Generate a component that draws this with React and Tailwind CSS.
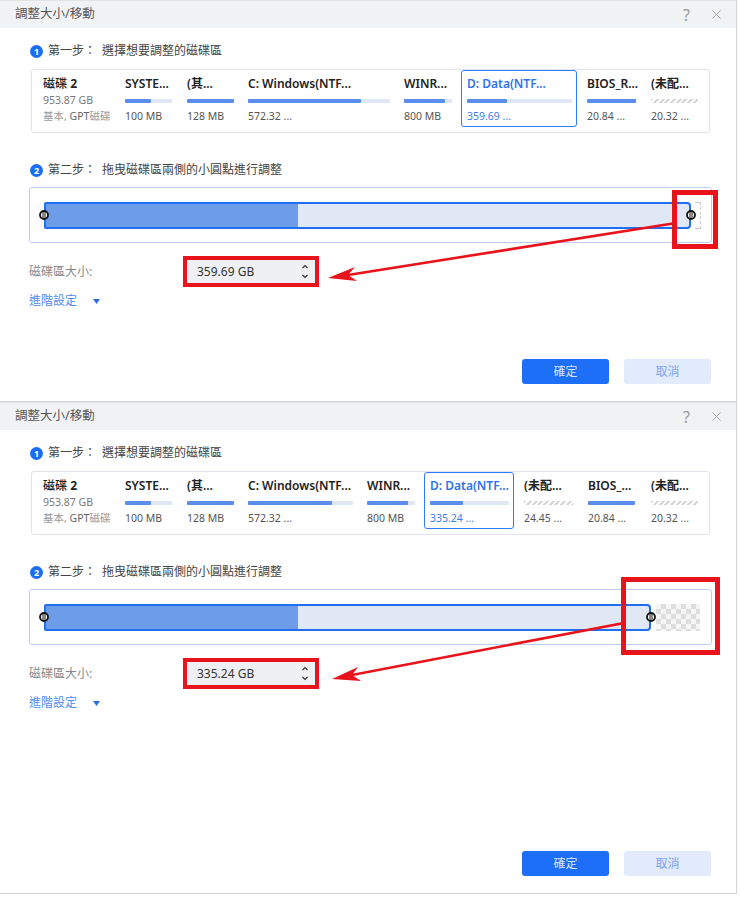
import { X } from 'lucide-react';

const top = {
  height: 'h-[402px]',
  parts: [
    { w: 'w-[62px]', name: 'SYSTE...', bar: 'w-[47px]', fill: 'w-[26px]', size: '100 MB' },
    { w: 'w-[61px]', name: '(其...', bar: 'w-[47px]', fill: 'w-[47px]', size: '128 MB' },
    { w: 'w-[156px]', name: 'C: Windows(NTF...', bar: 'w-[142px]', fill: 'w-[113px]', size: '572.32 ...' },
    { w: 'w-[57px]', name: 'WINR...', bar: 'w-[48px]', fill: 'w-[41px]', size: '800 MB' },
    { w: 'w-[126px]', box: 'w-[116px]', sel: true, name: 'D: Data(NTF...', bar: 'w-[105px]', fill: 'w-[40px]', size: '359.69 ...' },
    { w: 'w-[64px]', name: 'BIOS_R...', bar: 'w-[49px]', fill: 'w-[49px]', size: '20.84 ...' },
    { w: 'w-[58px]', name: '(未配...', bar: 'w-[47px]', free: true, size: '20.32 ...' },
  ],
  track: 'w-[647px]',
  rest: 'small',
  value: '359.69 GB',
};

const bottom = {
  height: 'h-[492px]',
  parts: [
    { w: 'w-[62px]', name: 'SYSTE...', bar: 'w-[47px]', fill: 'w-[26px]', size: '100 MB' },
    { w: 'w-[61px]', name: '(其...', bar: 'w-[47px]', fill: 'w-[47px]', size: '128 MB' },
    { w: 'w-[119px]', name: 'C: Windows(NTF...', bar: 'w-[105px]', fill: 'w-[84px]', size: '572.32 ...' },
    { w: 'w-[57px]', name: 'WINR...', bar: 'w-[48px]', fill: 'w-[41px]', size: '800 MB' },
    { w: 'w-[100px]', box: 'w-[90px]', sel: true, name: 'D: Data(NTF...', bar: 'w-[79px]', fill: 'w-[33px]', size: '335.24 ...' },
    { w: 'w-[64px]', name: '(未配...', bar: 'w-[49px]', free: true, size: '24.45 ...' },
    { w: 'w-[63px]', name: 'BIOS_...', bar: 'w-[47px]', fill: 'w-[47px]', size: '20.84 ...' },
    { w: 'w-[58px]', name: '(未配...', bar: 'w-[47px]', free: true, size: '20.32 ...' },
  ],
  track: 'w-[607px]',
  rest: 'checker',
  value: '335.24 GB',
};

const Handle = ({ side }) => (
  <svg
    width="10"
    height="10"
    viewBox="0 0 10 10"
    className={`absolute top-1/2 -translate-y-1/2 ${side === 'left' ? 'left-[-7px]' : 'right-[-7px]'}`}
  >
    <circle cx="5" cy="5" r="4" fill="#fff" stroke="#111" strokeWidth="1.8" />
    <line x1="4" y1="2" x2="4" y2="8" stroke="#111" strokeWidth="1" />
    <line x1="6" y1="2" x2="6" y2="8" stroke="#111" strokeWidth="1" />
  </svg>
);

const Step = ({ n, label, text }) => (
  <div className="flex h-4 items-center pl-px">
    <span className="flex h-[13px] w-[13px] items-center justify-center rounded-full bg-[#1b6ef3] text-[9px] font-bold leading-none text-white">
      {n}
    </span>
    <span className="ml-[5px] text-[12px] text-[#444]">{label}</span>
    <span className="ml-[6px] text-[12px] text-[#444]">{text}</span>
  </div>
);

const Part = ({ p }) => (
  <div className={`${p.w} shrink-0`}>
    <div
      className={
        p.sel
          ? `${p.box} h-[57px] rounded-[3px] border-[1.5px] border-[#2f7cf6] pl-[5px] pt-[5px]`
          : 'pt-[6px]'
      }
    >
      <div className={`h-4 text-[12px] font-semibold leading-4 ${p.sel ? 'text-[#2f72ee]' : 'text-[#222]'}`}>
        {p.name}
      </div>
      {p.free ? (
        <div className={`${p.bar} mt-[7px] h-1 bg-[repeating-linear-gradient(135deg,#d6d6d6_0_2px,transparent_2px_4px)]`} />
      ) : (
        <div className={`${p.bar} mt-[7px] h-1 rounded-[1px] bg-[#dfe7f5]`}>
          <div className={`${p.fill} h-full rounded-[1px] bg-[#5b8ded]`} />
        </div>
      )}
      <div className={`mt-[5px] h-4 text-[10.5px] leading-4 ${p.sel ? 'text-[#3b7cf0]' : 'text-[#555]'}`}>
        {p.size}
      </div>
    </div>
  </div>
);

const Dialog = ({ d }) => (
  <div className={`flex ${d.height} w-[737px] flex-col border-r border-b border-[#d4d4d4] bg-white`}>
    <div className="flex h-[28px] shrink-0 items-center justify-between border-t border-[#e2e3e5] bg-[#f1f2f4] pl-[15px] pr-[12px]">
      <span className="text-[12.5px] text-[#555]">調整大小/移動</span>
      <div className="flex items-center gap-[19px] text-[#9a9a9a]">
        <span className="text-[16px] leading-none">?</span>
        <X size={15} strokeWidth={1.4} />
      </div>
    </div>

    <div className="flex flex-1 flex-col pl-[29px]">
      <div className="mt-[15px]">
        <Step n="1" label="第一步：" text="選擇想要調整的磁碟區" />
      </div>

      <div className="ml-[2px] mt-[10px] flex h-[64px] w-[679px] rounded-[3px] border border-[#dfe3ea] pl-[11px]">
        <div className="w-[82px] shrink-0 pt-[6px] leading-4">
          <div className="text-[12px] font-medium text-[#222]">
            磁碟 <span className="font-bold">2</span>
          </div>
          <div className="text-[10.5px] text-[#777]">953.87 GB</div>
          <div className="text-[10.5px] text-[#999]">
            基本, <span className="text-[#666]">GPT</span>磁碟
          </div>
        </div>
        {d.parts.map((p, i) => (
          <Part key={i} p={p} />
        ))}
      </div>

      <div className="mt-[29px]">
        <Step n="2" label="第二步：" text="拖曳磁碟區兩側的小圓點進行調整" />
      </div>

      <div className="mt-[9px] flex h-[56px] w-[683px] items-center rounded-[3px] border border-[#b7cff6] pl-[14px]">
        <div className={`relative ${d.track} h-[27px] rounded-l-[2px] rounded-r-[4px] border-2 border-[#1f6ff2] bg-[#e1e8f5]`}>
          <div className="h-full w-[252px] bg-[#6d9ce8]" />
          <Handle side="left" />
          <Handle side="right" />
        </div>
        {d.rest === 'small' ? (
          <div className="ml-[4px] h-[27px] w-[6px] border-y border-r border-dashed border-[#c9c9c9]" />
        ) : (
          <div className="ml-[5px] h-[27px] w-[44px] bg-[repeating-conic-gradient(#dedede_0_25%,#f6f6f6_0_50%)] bg-[length:10px_10px]" />
        )}
      </div>

      <div className="mt-[13px] flex items-center">
        <span className="w-[154px] text-[12px] text-[#888]">磁碟區大小:</span>
        <div className="w-[136px] border-4 border-[#e8131b]">
          <div className="flex h-[23px] items-center justify-between bg-[#eef0f4] pl-[10px] pr-[6px]">
            <span className="text-[12px] text-[#333]">{d.value}</span>
            <svg width="8" height="17" viewBox="0 0 8 17" fill="none" stroke="#333" strokeWidth="1.2">
              <path d="M1.5 5 L4 2.5 L6.5 5" />
              <path d="M1.5 12 L4 14.5 L6.5 12" />
            </svg>
          </div>
        </div>
      </div>

      <div className="mt-[6px] flex h-4 items-center">
        <span className="text-[12px] text-[#4f8bf0]">進階設定</span>
        <svg width="7" height="5" viewBox="0 0 7 5" className="ml-[16px]">
          <path d="M0 0 H7 L3.5 5 Z" fill="#2f6be3" />
        </svg>
      </div>

      <div className="mb-[17px] mr-[25px] mt-auto flex justify-end gap-[15px]">
        <button className="flex h-[25px] w-[87px] items-center justify-center rounded-[3px] bg-[#1d6ff7] text-[12px] text-[#d6e4ff]">
          確定
        </button>
        <button className="flex h-[25px] w-[87px] items-center justify-center rounded-[3px] bg-[#e2ebfb] text-[12px] text-[#7ea2ea]">
          取消
        </button>
      </div>
    </div>
  </div>
);

export default function App() {
  return (
    <div className="relative h-[907px] w-[740px] overflow-hidden bg-white font-['Noto_Sans','Noto_Sans_CJK_TC',sans-serif]">
      <Dialog d={top} />
      <Dialog d={bottom} />

      {/* annotations */}
      <div className="pointer-events-none absolute left-[672px] top-[190px] h-[59px] w-[46px] border-[5px] border-[#e8131b]" />
      <div className="pointer-events-none absolute left-[621px] top-[577px] h-[78px] w-[99px] border-[5px] border-[#e8131b]" />
      <svg className="pointer-events-none absolute inset-0" width="740" height="907">
        <line x1="676" y1="223" x2="348" y2="275" stroke="#e8131b" strokeWidth="2.6" />
        <polygon points="328,278 357,281 348,275 355,267" fill="#e8131b" />
        <line x1="624" y1="623" x2="352" y2="675" stroke="#e8131b" strokeWidth="2.6" />
        <polygon points="332,679 361,681 352,675 358,667" fill="#e8131b" />
      </svg>
    </div>
  );
}
